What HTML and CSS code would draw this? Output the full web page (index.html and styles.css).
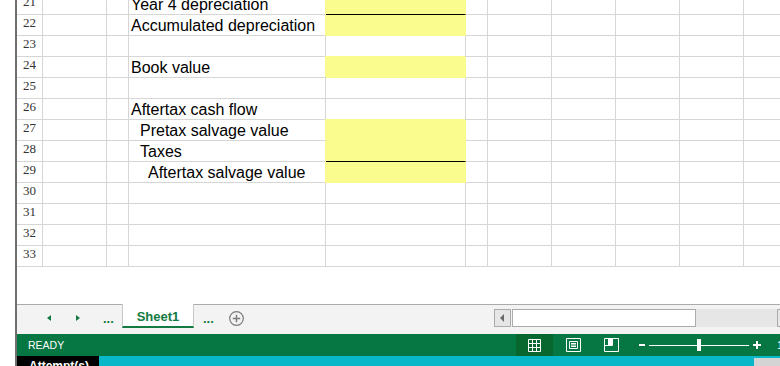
FILE: index.html
```html
<!DOCTYPE html>
<html lang="en">
<head>
    <meta charset="UTF-8">
    <title>Sheet1</title>
    <link rel="stylesheet" href="styles.css">
</head>
<body>
    <div class="frame">
        <!-- grid -->
        <div class="sheet">
            <div class="rows">
                <div class="row"><div class="hd">21</div><div></div><div></div><div class="lbl">Year 4 depreciation</div><div class="fill line"></div><div></div><div></div><div></div><div></div><div></div><div></div></div>
                <div class="row"><div class="hd">22</div><div></div><div></div><div class="lbl">Accumulated depreciation</div><div class="fill"></div><div></div><div></div><div></div><div></div><div></div><div></div></div>
                <div class="row"><div class="hd">23</div><div></div><div></div><div></div><div></div><div></div><div></div><div></div><div></div><div></div><div></div></div>
                <div class="row"><div class="hd">24</div><div></div><div></div><div class="lbl">Book value</div><div class="fill top"></div><div></div><div></div><div></div><div></div><div></div><div></div></div>
                <div class="row"><div class="hd">25</div><div></div><div></div><div></div><div></div><div></div><div></div><div></div><div></div><div></div><div></div></div>
                <div class="row"><div class="hd">26</div><div></div><div></div><div class="lbl">Aftertax cash flow</div><div></div><div></div><div></div><div></div><div></div><div></div><div></div></div>
                <div class="row"><div class="hd">27</div><div></div><div></div><div class="lbl ind1">Pretax salvage value</div><div class="fill top"></div><div></div><div></div><div></div><div></div><div></div><div></div></div>
                <div class="row"><div class="hd">28</div><div></div><div></div><div class="lbl ind1">Taxes</div><div class="fill line"></div><div></div><div></div><div></div><div></div><div></div><div></div></div>
                <div class="row"><div class="hd">29</div><div></div><div></div><div class="lbl ind2">Aftertax salvage value</div><div class="fill"></div><div></div><div></div><div></div><div></div><div></div><div></div></div>
                <div class="row"><div class="hd">30</div><div></div><div></div><div></div><div></div><div></div><div></div><div></div><div></div><div></div><div></div></div>
                <div class="row"><div class="hd">31</div><div></div><div></div><div></div><div></div><div></div><div></div><div></div><div></div><div></div><div></div></div>
                <div class="row"><div class="hd">32</div><div></div><div></div><div></div><div></div><div></div><div></div><div></div><div></div><div></div><div></div></div>
                <div class="row"><div class="hd">33</div><div></div><div></div><div></div><div></div><div></div><div></div><div></div><div></div><div></div><div></div></div>
            </div>
        </div>

        <!-- sheet tabs -->
        <div class="tabs">
            <div class="tab-nav">
                <span class="arrow-left"></span>
                <span class="arrow-right"></span>
                <span class="dots">...</span>
            </div>
            <div class="tab"><span>Sheet1</span></div>
            <div class="tab-rest">
                <span class="dots more">...</span>
                <span class="add">
                    <svg width="15" height="15" viewBox="0 0 15 15"><circle cx="7.5" cy="7.5" r="6.8" fill="none" stroke="#7a7a7a" stroke-width="1.2"/><path d="M7.5 3.8v7.4M3.8 7.5h7.4" stroke="#7a7a7a" stroke-width="1.4"/></svg>
                </span>
                <div class="hscroll">
                    <div class="sbtn"><span class="sarrow"></span></div>
                    <div class="thumb"></div>
                    <div class="track"></div>
                    <div class="sbtn"></div>
                </div>
            </div>
        </div>

        <!-- status bar -->
        <div class="status">
            <div class="status-label">READY</div>
            <div class="view active">
                <svg width="13" height="13" viewBox="0 0 13 13"><path d="M.5.5h12v12H.5zM4.5.5v12M8.5.5v12M.5 4.5h12M.5 8.5h12" fill="none" stroke="#fff"/></svg>
            </div>
            <div class="view page">
                <svg width="15" height="14" viewBox="0 0 15 14"><path d="M.5.5h14v13H.5zM3.5 3.5h8v7h-8zM5 5.5h5M5 7h5M5 8.5h5" fill="none" stroke="#fff"/></svg>
            </div>
            <div class="view brk">
                <svg width="15" height="14" viewBox="0 0 15 14"><path d="M.5.5h14v13H.5zM.5 7.5h8V.5" fill="none" stroke="#fff"/><rect x="4" y="1" width="4" height="6" fill="#fff"/></svg>
            </div>
            <span class="minus"></span>
            <div class="slider"><span class="knob"></span></div>
            <span class="plus"></span>
            <span class="zoom">100%</span>
        </div>

        <div class="strip">
            <div class="attempts">Attempt(s)</div>
            <div class="bar"><span class="ghost"></span></div>
        </div>
    </div>
</body>
</html>
```

FILE: styles.css
```css
* {
    box-sizing: border-box;
}
body {
    margin: 0;
    width: 780px;
    height: 366px;
    overflow: hidden;
    background: #fff;
    padding-left: 15px;
    font-family: "Liberation Sans", Arial, sans-serif;
}
.frame {
    border-left: 2px solid #6e6e6e;
    height: 366px;
    display: flex;
    flex-direction: column;
}
.sheet {
    height: 304px;
    flex-shrink: 0;
    overflow: hidden;
}
.rows {
    margin-top: -6px;
}
.row {
    display: grid;
    grid-template-columns: 26px 64px 22px 197px 140px 22px 64px 64px 64px 64px 64px;
    grid-template-rows: 21px;
    height: 21px;
}
.row > div {
    border-right: 1px solid #d6d6d6;
    border-bottom: 1px solid #d6d6d6;
    font-size: 16px;
    line-height: 19px;
    padding-top: 1px;
    white-space: nowrap;
    color: #000;
}
.row > .hd {
    font-family: "Liberation Serif", "Times New Roman", serif;
    font-size: 13px;
    line-height: 16px;
    padding-top: 0;
    text-align: center;
    color: #333;
}
.row > .lbl {
    padding-left: 2px;
}
.row > .ind1 {
    padding-left: 11px;
}
.row > .ind2 {
    padding-left: 19px;
}
.row > .fill {
    background: #fbfc8e;
    border-color: #fbfc8e;
    box-shadow: -1px 0 0 #fbfc8e;
}
.row > .fill.top {
    box-shadow: -1px -1px 0 #fbfc8e;
}
.row > .fill.line {
    border-bottom-color: #000;
}

/* tabs */
.tabs {
    height: 30px;
    flex-shrink: 0;
    display: flex;
    background: #f3f3f3;
    overflow: hidden;
}
.tab-nav,
.tab-rest {
    border-top: 1px solid #ababab;
    display: flex;
    align-items: center;
    padding-bottom: 3px;
}
.tab-nav {
    width: 105px;
    flex-shrink: 0;
}
.arrow-left {
    margin-left: 30px;
    width: 0;
    height: 0;
    border-top: 3px solid transparent;
    border-bottom: 3px solid transparent;
    border-right: 4px solid #137a42;
}
.arrow-right {
    margin-left: 25px;
    width: 0;
    height: 0;
    border-top: 3px solid transparent;
    border-bottom: 3px solid transparent;
    border-left: 4px solid #137a42;
}
.dots {
    margin-left: 23px;
    color: #137a42;
    font-weight: bold;
    font-size: 13px;
    line-height: 14px;
    padding-top: 2px;
    flex-shrink: 0;
}
.dots.more {
    margin-left: 9px;
}
.tab {
    width: 72px;
    height: 24px;
    flex-shrink: 0;
    background: #fff;
    border-left: 1px solid #c8c8c8;
    border-right: 1px solid #c8c8c8;
    border-bottom: 2px solid #137a42;
    text-align: center;
    color: #137a42;
    font-weight: bold;
    font-size: 13px;
    line-height: 15px;
    padding-top: 5px;
}
.tab-rest {
    flex: 1;
    min-width: 0;
}
.add {
    margin-left: 15px;
    width: 15px;
    height: 15px;
    flex-shrink: 0;
    display: flex;
}
.hscroll {
    margin-left: 250px;
    display: flex;
    height: 18px;
    flex-shrink: 0;
}
.sbtn {
    width: 17px;
    flex-shrink: 0;
    background: #e6e6e6;
    border: 1px solid #ababab;
    display: flex;
    align-items: center;
    justify-content: center;
    margin-right: 1px;
}
.sarrow {
    width: 0;
    height: 0;
    border-top: 4px solid transparent;
    border-bottom: 4px solid transparent;
    border-right: 4px solid #6a6a6a;
}
.thumb {
    width: 184px;
    flex-shrink: 0;
    background: #fff;
    border: 1px solid #ababab;
}
.track {
    width: 81px;
    flex-shrink: 0;
    background: #e6e6e6;
}

/* status bar */
.status {
    height: 22px;
    flex-shrink: 0;
    background: #067642;
    display: flex;
    align-items: center;
    color: #fff;
    white-space: nowrap;
    overflow: hidden;
}
.status-label {
    width: 499px;
    padding-left: 11px;
    font-size: 10.5px;
    flex-shrink: 0;
}
.view {
    display: flex;
    flex-shrink: 0;
}
.view.active {
    width: 37px;
    height: 22px;
    background: #07672f;
    align-items: center;
    justify-content: center;
}
.view.page {
    margin-left: 13px;
}
.view.brk {
    margin-left: 23px;
}
.minus {
    margin-left: 20px;
    width: 6px;
    height: 2px;
    background: #fff;
    flex-shrink: 0;
}
.slider {
    margin-left: 4px;
    width: 100px;
    height: 12px;
    flex-shrink: 0;
    display: flex;
    align-items: center;
    background: linear-gradient(#fff, #fff) center / 100% 1px no-repeat;
}
.knob {
    margin-left: 48px;
    width: 4px;
    height: 12px;
    background: #fff;
}
.plus {
    margin-left: 4px;
    width: 8px;
    height: 8px;
    flex-shrink: 0;
    background: linear-gradient(#fff, #fff) center / 8px 2px no-repeat,
                linear-gradient(#fff, #fff) center / 2px 8px no-repeat;
}
.zoom {
    margin-left: 16px;
    font-size: 11px;
    flex-shrink: 0;
}

/* bottom strip */
.strip {
    height: 10px;
    flex-shrink: 0;
    display: flex;
    overflow: hidden;
}
.attempts {
    width: 82px;
    flex-shrink: 0;
    background: #000;
    color: #fff;
    font-weight: bold;
    font-size: 12px;
    line-height: 12px;
    padding: 4px 0 0 12px;
    white-space: nowrap;
}
.bar {
    flex: 1;
    background: #08b8c9;
    display: flex;
}
.ghost {
    margin-left: auto;
    margin-top: 2px;
    width: 26px;
    background: #d4d4d4;
}
```
